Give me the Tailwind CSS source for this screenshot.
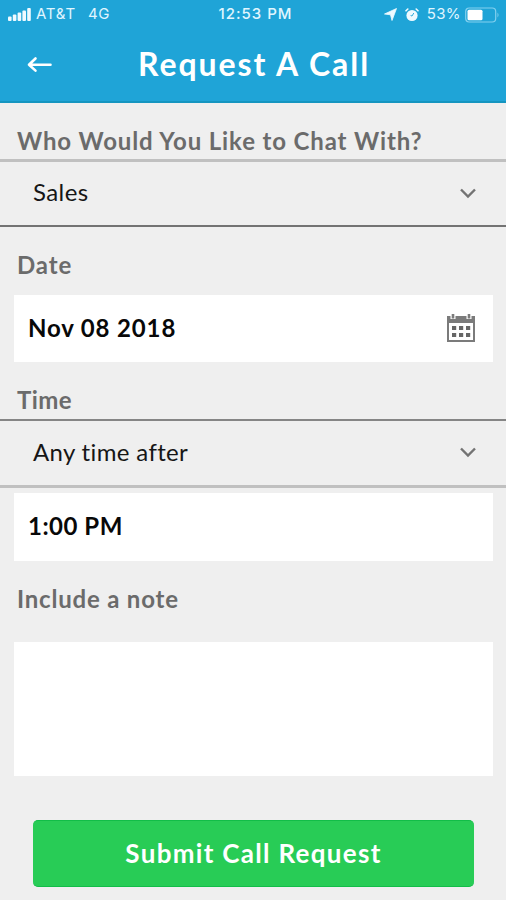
<!DOCTYPE html>
<html lang="en">
<head>
<meta charset="utf-8">
<title>Request A Call</title>
<script src="https://cdn.jsdelivr.net/npm/@tailwindcss/browser@4"></script>
</head>
<body class="bg-[#efefef] overflow-hidden">
<main class="w-[506px] h-[900px] flex flex-col font-['Lato','Open_Sans',sans-serif] text-[#6b6b6b] whitespace-nowrap">
  <header class="h-[103px] shrink-0 bg-[#1fa4d7] border-b-2 border-[#1595c0] text-white">
    <div class="h-[29px] grid grid-cols-3 items-center px-2 font-['Inter',sans-serif] text-[15px] text-[#e0f6ff]">
      <div class="flex items-center">
        <svg class="w-6 h-4" viewBox="0 0 24 16" fill="#effaff"><rect x="0" y="9.5" width="3.6" height="4.5" rx="1"/><rect x="4.8" y="7.5" width="3.6" height="6.500" rx="1"/><rect x="9.600" y="5.500" width="3.600" height="8.500" rx="1"/><rect x="14.400" y="3.500" width="3.600" height="10.500" rx="1"/><rect x="19.200" y="1" width="3.600" height="13" rx="1"/></svg>
        <span class="ml-[4px] tracking-[0.8px]">AT&amp;T</span><span class="ml-[12px] tracking-[0.6px]">4G</span>
      </div>
      <div class="text-center font-medium tracking-[1px] pl-[5px]">12:53 PM</div>
      <div class="flex items-center justify-end">
        <svg class="w-[13px] h-[13px]" viewBox="0 0 13 13" fill="#effaff" stroke="#effaff" stroke-width=".8" stroke-linejoin="round"><path d="M12.500.5 8 12.500 6.500 6.800.5 6Z"/></svg>
        <svg class="w-[14px] h-[14px] ml-2" viewBox="0 0 14 14"><circle cx="7" cy="7.500" r="5.600" fill="#effaff"/><path d="M1 2.800 2.800 1M13 2.800 11.200 1" stroke="#effaff" stroke-width="1.600" stroke-linecap="round"/><path d="M8.800 5 7 8 5.600 7.500" fill="none" stroke="#1fa4d7" stroke-width=".9"/></svg>
        <span class="ml-[8px] tracking-[0.4px]">53%</span>
        <svg class="w-[36px] h-[16px] ml-[4px] -mr-[3px] shrink-0" viewBox="0 0 36 16"><rect x=".7" y="1" width="30" height="14" rx="3.500" fill="none" stroke="#83d0ef" stroke-width="1.200"/><rect x="2.500" y="2.800" width="15" height="10.500" rx="1.500" fill="#fff"/><path d="M32.500 5.500q2 2.500 0 5Z" fill="#83d0ef"/></svg>
      </div>
    </div>
    <div class="h-[70px] relative flex items-center justify-center">
      <svg class="absolute left-[27px] top-[27px] w-[26px] h-[18px]" viewBox="0 0 26 18" fill="none" stroke="#fff" stroke-width="2.600" stroke-linecap="round" stroke-linejoin="round"><path d="M23.500 8.800H2M8.500 2.500 2 8.800l6.500 5.800"/></svg>
      <h1 class="text-[32px] font-bold leading-none tracking-[1.95px] pl-[2px]">Request A Call</h1>
    </div>
  </header>

  <label class="h-[56px] pt-[20px] pl-[17px] text-[24px] leading-[36px] font-bold tracking-[0.87px] shrink-0">Who Would You Like to Chat With?</label>
  <div class="h-[68px] shrink-0 border-t-[3px] border-t-[#c0c0c0] border-b-2 border-b-[#737373] flex items-center justify-between pl-[33px] pr-[29px]">
    <span class="text-[24px] leading-none text-[#161616] tracking-[0.4px] pb-[3px]">Sales</span>
    <svg class="w-[18px] h-[12px] mb-[2px]" viewBox="0 0 18 12" fill="none" stroke="#737373" stroke-width="2.400"><path d="M2 2.500 9 9.500l7-7"/></svg>
  </div>

  <label class="h-[68px] pt-[20px] pl-[17px] text-[24px] leading-[36px] font-bold tracking-[0.9px] shrink-0">Date</label>
  <div class="h-[67px] ml-[14px] mr-[13px] shrink-0 bg-white flex items-center justify-between pl-[14px] pr-[17px]">
    <span class="text-[24px] leading-none font-bold text-[#080808] tracking-[0.85px] pb-[2px]">Nov 08 2018</span>
    <svg class="w-[30px] h-[30px] mb-[2px]" viewBox="0 0 30 30"><rect x="2" y="4" width="26" height="24" fill="#fff" stroke="#7b7b7b" stroke-width="2"/><path d="M1 3h28v7H1z" fill="#7b7b7b"/><path d="M7 0v6M23 0v6" stroke="#fff" stroke-width="5" /><path d="M7 1v4.500M23 1v4.500" stroke="#7b7b7b" stroke-width="2.600"/><path d="M6 13h4.200v4H6zM13 13h4.200v4H13zM20 13h4.200v4H20zM6 20h4.200v4H6zM13 20h4.200v4H13zM20 20h4.200v4H20z" fill="#666"/></svg>
  </div>

  <label class="h-[57px] pt-[20px] pl-[17px] text-[24px] leading-[36px] font-bold tracking-[0.4px] shrink-0">Time</label>
  <div class="h-[69px] shrink-0 border-t-2 border-t-[#858585] border-b-[3px] border-b-[#c0c0c0] flex items-center justify-between pl-[33px] pr-[29px]">
    <span class="text-[24px] leading-none text-[#161616] tracking-[0.35px] pb-[2px]">Any time after</span>
    <svg class="w-[18px] h-[12px] mb-[2px]" viewBox="0 0 18 12" fill="none" stroke="#737373" stroke-width="2.400"><path d="M2 2.500 9 9.500l7-7"/></svg>
  </div>
  <div class="h-[68px] mt-[5px] ml-[14px] mr-[13px] shrink-0 bg-white flex items-center pl-[14px]">
    <span class="text-[24px] leading-none font-bold text-[#080808] tracking-[0.5px] pb-[3px]">1:00 PM</span>
  </div>

  <label class="h-[81px] pt-[20px] pl-[17px] text-[24px] leading-[36px] font-bold tracking-[0.8px] shrink-0">Include a note</label>
  <div class="h-[134px] ml-[14px] mr-[13px] shrink-0 bg-white"></div>

  <button class="h-[67px] mt-[44px] ml-[33px] mr-[32px] pb-[2px] shrink-0 rounded-[5px] bg-[#28cc56] border-y border-[#12bd48] text-white text-[26px] leading-none font-bold tracking-[1.3px]">Submit Call Request</button>
</main>
</body>
</html>
